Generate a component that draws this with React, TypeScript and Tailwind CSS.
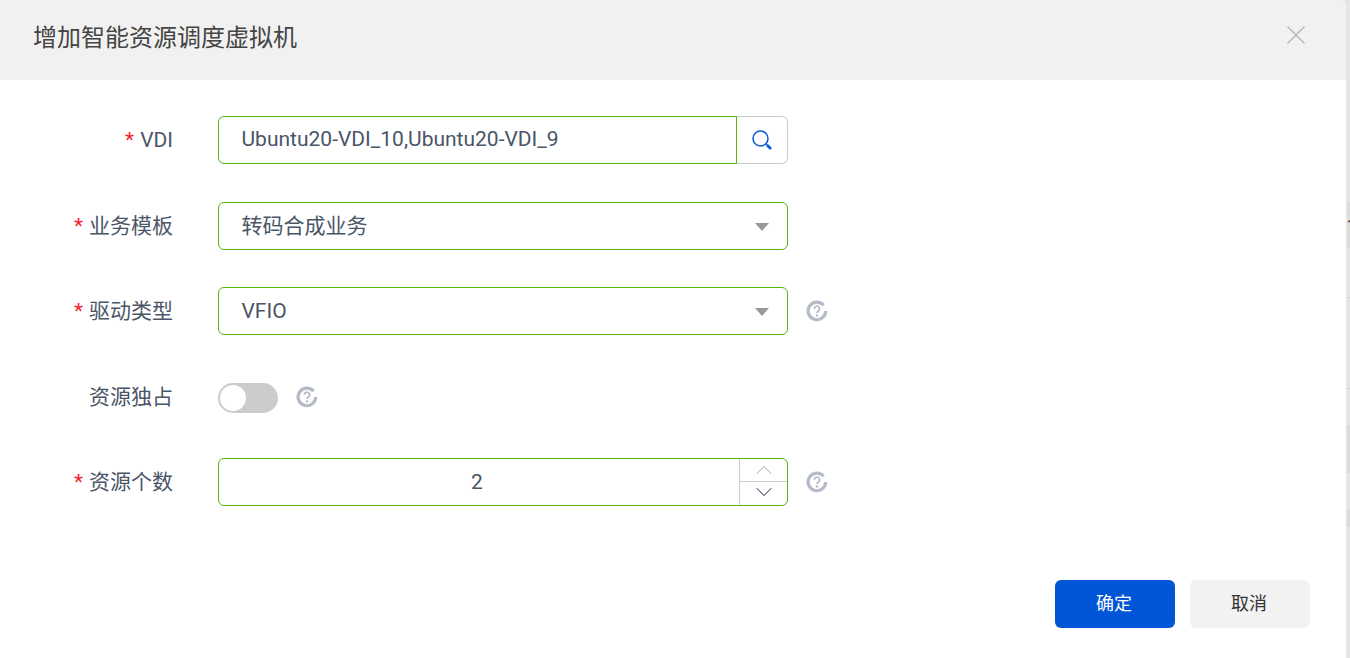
import type { ReactNode } from 'react';
import { X, ChevronUp, ChevronDown } from 'lucide-react';

const FONT = "font-['Roboto','Noto_Sans_CJK_SC',sans-serif]";

function HelpIcon() {
  return (
    <svg width="22" height="22" viewBox="0 0 22 22" fill="none" aria-hidden="true">
      <path d="M17.6 5.2A8.8 8.8 0 1 0 19.7 11" stroke="#b4bac6" strokeWidth="3.2" />
      <path d="M8.4 8.9a2.6 2.6 0 1 1 4 2.1c-.9.6-1.4 1-1.4 2" stroke="#b4bac6" strokeWidth="1.8" />
      <circle cx="11" cy="15.4" r="1.2" fill="#b4bac6" />
    </svg>
  );
}

function SearchIcon() {
  return (
    <svg width="24" height="24" viewBox="0 0 24 24" fill="none" aria-hidden="true">
      <circle cx="10.5" cy="10.5" r="7.5" stroke="#0a5bd6" strokeWidth="1.5" />
      <path d="M15.8 15.8l1.6 1.6" stroke="#0a5bd6" strokeWidth="1.3" />
      <path d="M17 17l4 4" stroke="#0a5bd6" strokeWidth="2.6" />
    </svg>
  );
}

function Caret() {
  return <span className="mt-[2px] h-0 w-0 border-x-[7px] border-t-[8px] border-x-transparent border-t-[#999999]" />;
}

function Row({ label, required, children }: { label: string; required?: boolean; children: ReactNode }) {
  return (
    <div className="flex h-12 items-center">
      <label className="w-[173px] shrink-0 pt-[2px] text-right text-[21px] text-[#4a5568]">
        {required && <span className="mr-[6px] text-[#f5222d]">*</span>}
        {label}
      </label>
      <div className="ml-[45px] flex items-center">{children}</div>
    </div>
  );
}

export default function App() {
  return (
    <div className={`${FONT} flex h-[658px] w-full overflow-hidden bg-[#e6e6e6]`}>
      <div className="flex w-[1346px] shrink-0 flex-col rounded-tr-md bg-white">
        <div className="flex h-20 shrink-0 items-start justify-between rounded-tr-md bg-[#f1f1f1] pl-[33px] pr-[34px]">
          <h2 className="mt-5 text-2xl leading-9 text-[#444444]">增加智能资源调度虚拟机</h2>
          <X className="mt-[19px] text-[#b4bac6]" size={32} strokeWidth={1.2} />
        </div>

        <div className="mt-9 flex flex-col gap-[37.5px]">
          <Row label="VDI" required>
            <div className="flex h-12 w-[570px] rounded-md">
              <div className="flex flex-1 items-center rounded-l-md border border-[#55b60f] pl-[22.5px] text-[21px] text-[#4a5568]">
                Ubuntu20-VDI_10,Ubuntu20-VDI_9
              </div>
              <div className="flex w-[51px] items-center justify-center rounded-r-md border border-l-0 border-[#cccccc]">
                <SearchIcon />
              </div>
            </div>
          </Row>

          <Row label="业务模板" required>
            <div className="flex h-12 w-[570px] items-center justify-between rounded-md border border-[#55b60f] pl-[22.5px] pr-[18px] text-[21px] text-[#4a5568]">
              <span className="pt-[2px]">转码合成业务</span>
              <Caret />
            </div>
          </Row>

          <Row label="驱动类型" required>
            <div className="flex h-12 w-[570px] items-center justify-between rounded-md border border-[#55b60f] pl-[22.5px] pr-[18px] text-[21px] text-[#4a5568]">
              <span className="pt-[2px]">VFIO</span>
              <Caret />
            </div>
            <span className="ml-[18px] flex">
              <HelpIcon />
            </span>
          </Row>

          <Row label="资源独占">
            <div className="mt-[2px] flex h-[30px] w-[60px] items-center rounded-full bg-[#cccccc] pl-[2px]">
              <span className="h-[26px] w-[26px] rounded-full bg-white" />
            </div>
            <span className="ml-[18px] flex">
              <HelpIcon />
            </span>
          </Row>

          <Row label="资源个数" required>
            <div className="flex h-12 w-[570px] rounded-md border border-[#55b60f] text-[21px] text-[#4a5568]">
              <div className="flex flex-1 items-center justify-center pr-[4px] pt-[2px]">2</div>
              <div className="flex w-[48px] flex-col border-l border-[#cccccc]">
                <div className="flex h-[23px] shrink-0 items-center justify-center overflow-hidden border-b border-[#cccccc]">
                  <ChevronUp className="shrink-0 text-[#b4bac6]" size={28} strokeWidth={0.9} />
                </div>
                <div className="flex h-[23px] shrink-0 items-center justify-center overflow-hidden pb-[4px]">
                  <ChevronDown className="shrink-0 text-[#4a5568]" size={28} strokeWidth={0.9} />
                </div>
              </div>
            </div>
            <span className="ml-[18px] flex">
              <HelpIcon />
            </span>
          </Row>
        </div>

        <div className="mt-[74px] flex justify-end gap-[15px] pr-9">
          <button className="h-12 w-[120px] rounded-md bg-[#0056d6] pr-[2px] text-lg text-white">确定</button>
          <button className="h-12 w-[120px] rounded-md bg-[#f2f2f2] pr-[2px] text-lg text-[#333333]">取消</button>
        </div>
      </div>

      {/* sliver of the page behind the dialog */}
      <div className="flex min-w-0 flex-1 flex-col overflow-hidden pl-px">
        <div className="h-[202px] shrink-0" />
        <div className="h-[46px] shrink-0 overflow-hidden whitespace-nowrap bg-[#dcdcdc] pt-[10px] text-lg leading-6 text-[#333333]">合</div>
        <div className="h-[49px] shrink-0" />
        <div className="h-px shrink-0 bg-[#d4d4d4]" />
        <div className="h-[90px] shrink-0" />
        <div className="h-px shrink-0 bg-[#d4d4d4]" />
        <div className="h-9 shrink-0" />
        <div className="h-12 shrink-0 bg-[#dcdcdc]" />
        <div className="h-9 shrink-0" />
        <div className="h-[18px] shrink-0 bg-[#dcdcdc]" />
      </div>
    </div>
  );
}
